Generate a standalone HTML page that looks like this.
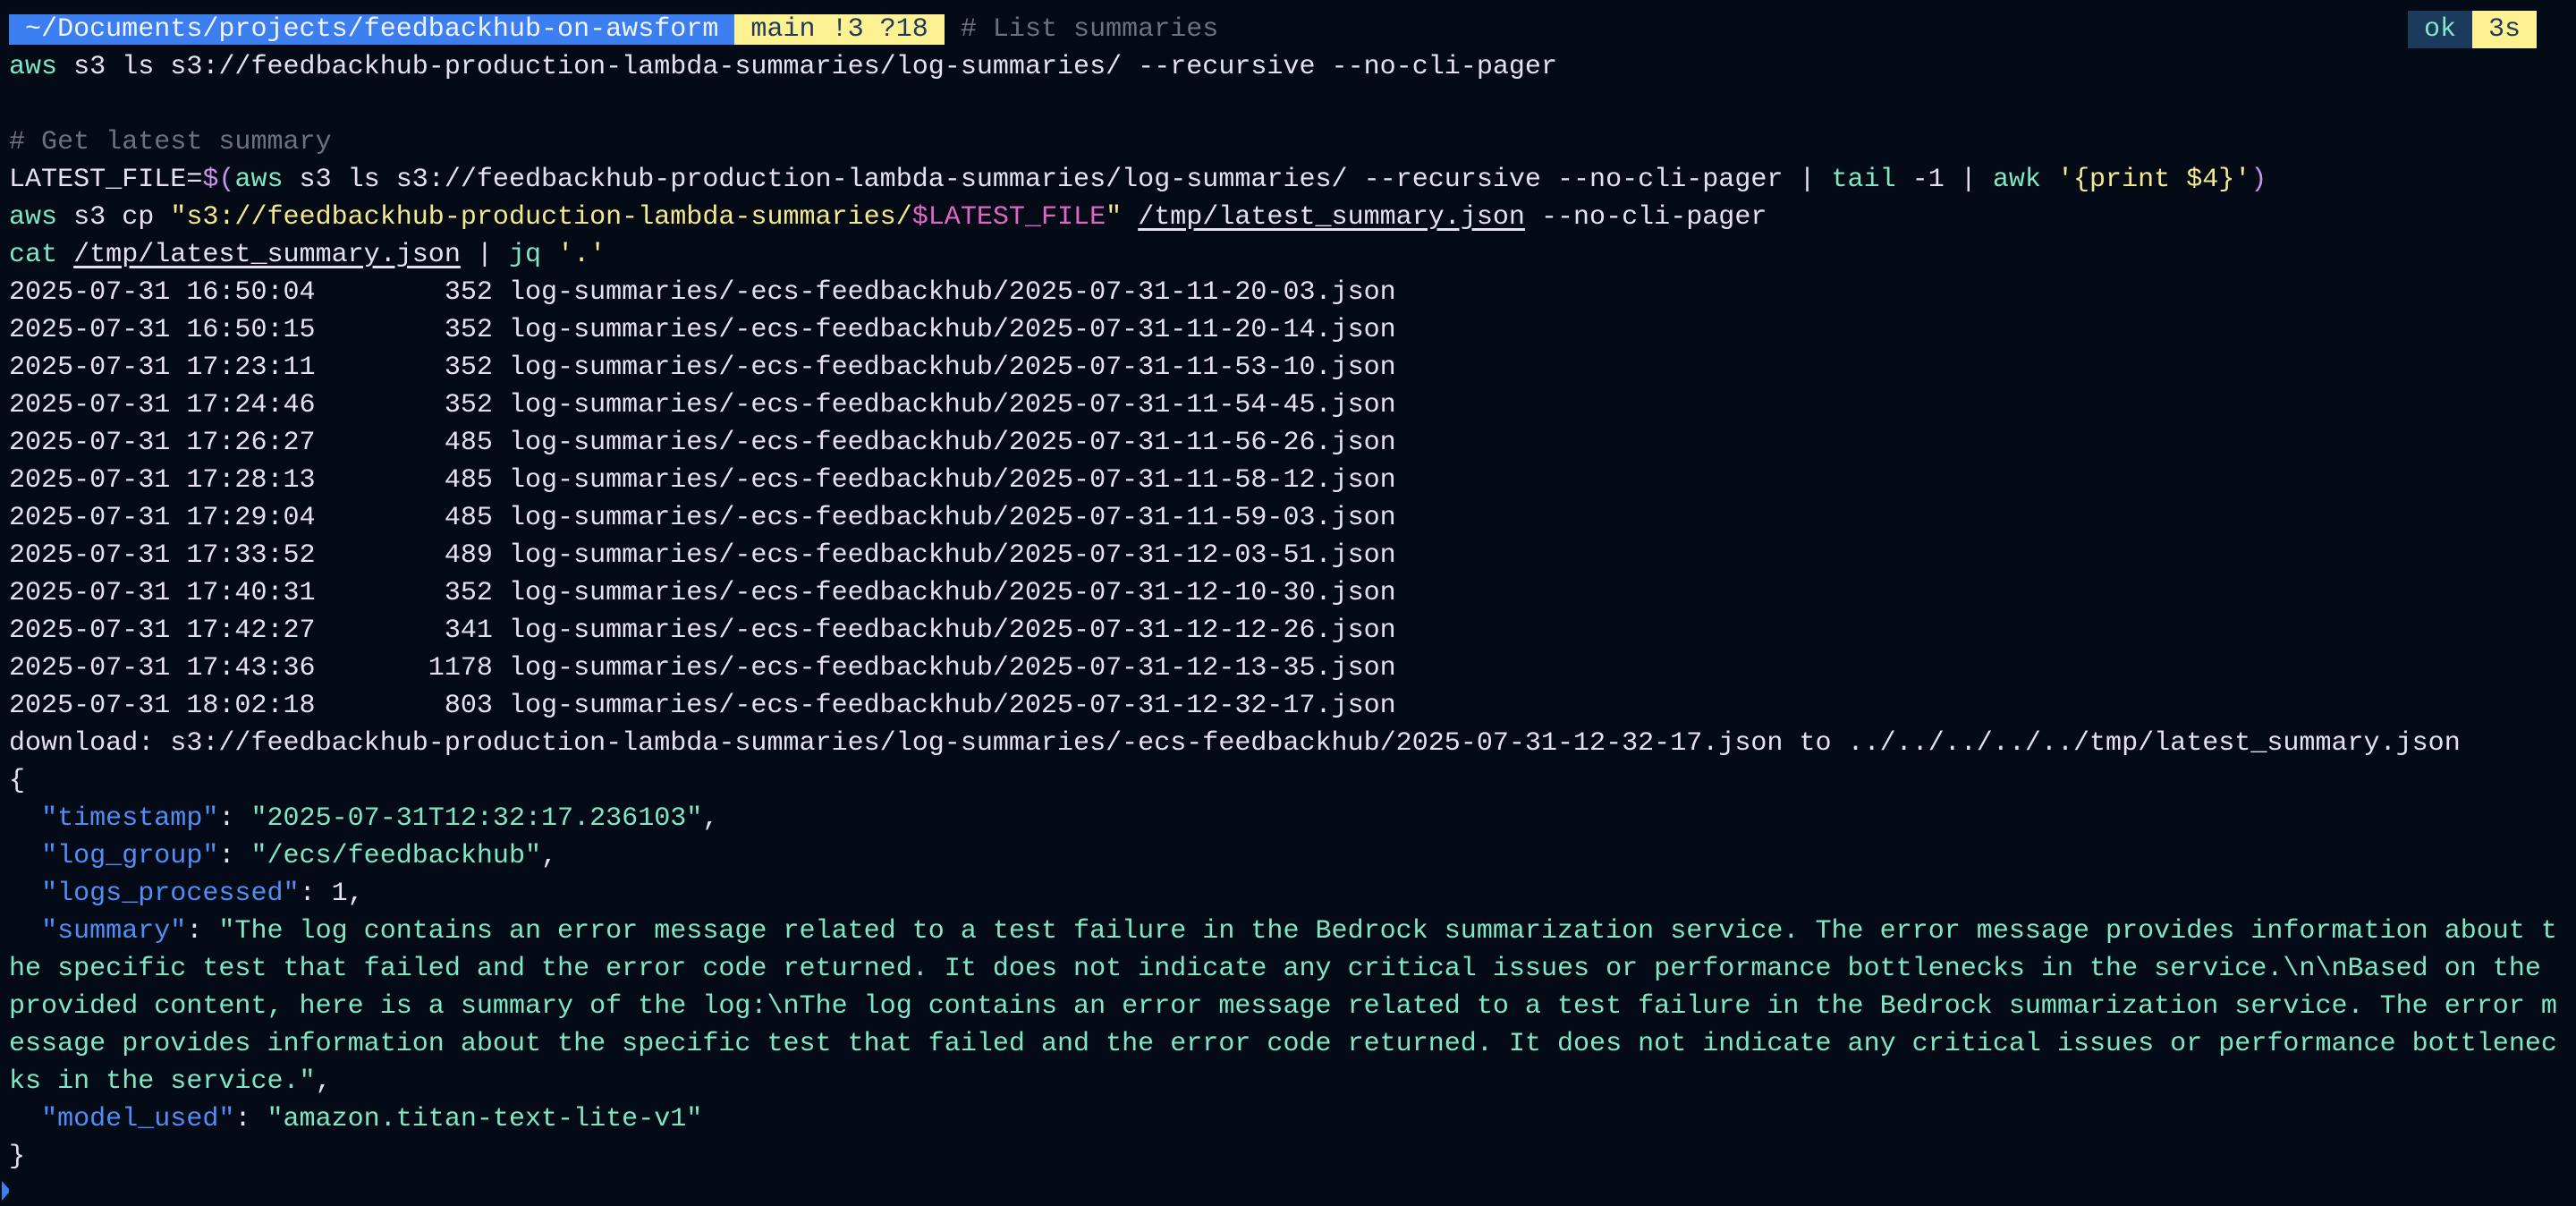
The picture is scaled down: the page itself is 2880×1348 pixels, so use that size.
<!DOCTYPE html>
<html><head><meta charset="utf-8"><style>
html,body{margin:0;padding:0;background:#050b16;width:2880px;height:1348px;overflow:hidden}
body{font-family:"Liberation Mono",monospace;font-size:30.05px;color:#e6e1ef;position:relative}
.l{position:absolute;left:10px;height:42px;line-height:42px;white-space:pre}
.g{color:#7ee8c4}.c{color:#6c717b}.p{color:#c792ea}.y{color:#f5e98c}.k{color:#4f8ef7}.pk{color:#e066c6}
.u{text-decoration:underline;text-underline-offset:5px}
.bl{background:#3b7ff0;color:#f3f3fb}.ye{background:#fdf191;color:#1e3a5f}
.ok{position:absolute;left:2692px;top:12px;width:72px;height:42px;line-height:42px;text-align:center;background:#1c3a5c;color:#7ee8c8}
.ts{position:absolute;left:2764px;top:12px;width:72px;height:42px;line-height:42px;text-align:center;background:#fdf191;color:#1e3a5f}
</style></head><body>
<div class="l" style="top:12px"><span class="bl"> ~/Documents/projects/feedbackhub-on-awsform </span><span class="ye"> main !3 ?18 </span> <span class="c"># List summaries</span></div>
<div class="ok">ok</div><div class="ts">3s</div>
<div class="l" style="top:54px"><span class="g">aws</span> s3 ls s3://feedbackhub-production-lambda-summaries/log-summaries/ --recursive --no-cli-pager</div>
<div class="l" style="top:138px"><span class="c"># Get latest summary</span></div>
<div class="l" style="top:180px">LATEST_FILE=<span class="p">$(</span><span class="g">aws</span> s3 ls s3://feedbackhub-production-lambda-summaries/log-summaries/ --recursive --no-cli-pager | <span class="g">tail</span> -1 | <span class="g">awk</span> <span class="y">'{print $4}'</span><span class="p">)</span></div>
<div class="l" style="top:222px"><span class="g">aws</span> s3 cp <span class="y">"s3://feedbackhub-production-lambda-summaries/</span><span class="pk">$LATEST_FILE</span><span class="y">"</span> <span class="u">/tmp/latest_summary.json</span> --no-cli-pager</div>
<div class="l" style="top:264px"><span class="g">cat</span> <span class="u">/tmp/latest_summary.json</span> | <span class="g">jq</span> <span class="y">'.'</span></div>
<div class="l" style="top:306px">2025-07-31 16:50:04        352 log-summaries/-ecs-feedbackhub/2025-07-31-11-20-03.json</div>
<div class="l" style="top:348px">2025-07-31 16:50:15        352 log-summaries/-ecs-feedbackhub/2025-07-31-11-20-14.json</div>
<div class="l" style="top:390px">2025-07-31 17:23:11        352 log-summaries/-ecs-feedbackhub/2025-07-31-11-53-10.json</div>
<div class="l" style="top:432px">2025-07-31 17:24:46        352 log-summaries/-ecs-feedbackhub/2025-07-31-11-54-45.json</div>
<div class="l" style="top:474px">2025-07-31 17:26:27        485 log-summaries/-ecs-feedbackhub/2025-07-31-11-56-26.json</div>
<div class="l" style="top:516px">2025-07-31 17:28:13        485 log-summaries/-ecs-feedbackhub/2025-07-31-11-58-12.json</div>
<div class="l" style="top:558px">2025-07-31 17:29:04        485 log-summaries/-ecs-feedbackhub/2025-07-31-11-59-03.json</div>
<div class="l" style="top:600px">2025-07-31 17:33:52        489 log-summaries/-ecs-feedbackhub/2025-07-31-12-03-51.json</div>
<div class="l" style="top:642px">2025-07-31 17:40:31        352 log-summaries/-ecs-feedbackhub/2025-07-31-12-10-30.json</div>
<div class="l" style="top:684px">2025-07-31 17:42:27        341 log-summaries/-ecs-feedbackhub/2025-07-31-12-12-26.json</div>
<div class="l" style="top:726px">2025-07-31 17:43:36       1178 log-summaries/-ecs-feedbackhub/2025-07-31-12-13-35.json</div>
<div class="l" style="top:768px">2025-07-31 18:02:18        803 log-summaries/-ecs-feedbackhub/2025-07-31-12-32-17.json</div>
<div class="l" style="top:810px">download: s3://feedbackhub-production-lambda-summaries/log-summaries/-ecs-feedbackhub/2025-07-31-12-32-17.json to ../../../../../tmp/latest_summary.json</div>
<div class="l" style="top:852px">{</div>
<div class="l" style="top:894px">  <span class="k">"timestamp"</span>: <span class="g">"2025-07-31T12:32:17.236103"</span>,</div>
<div class="l" style="top:936px">  <span class="k">"log_group"</span>: <span class="g">"/ecs/feedbackhub"</span>,</div>
<div class="l" style="top:978px">  <span class="k">"logs_processed"</span>: 1,</div>
<div class="l g" style="top:1020px"><span style="color:#e6e1ef">  </span><span class="k">"summary"</span><span style="color:#e6e1ef">: </span>"The log contains an error message related to a test failure in the Bedrock summarization service. The error message provides information about t</div>
<div class="l g" style="top:1062px">he specific test that failed and the error code returned. It does not indicate any critical issues or performance bottlenecks in the service.\n\nBased on the</div>
<div class="l g" style="top:1104px">provided content, here is a summary of the log:\nThe log contains an error message related to a test failure in the Bedrock summarization service. The error m</div>
<div class="l g" style="top:1146px">essage provides information about the specific test that failed and the error code returned. It does not indicate any critical issues or performance bottlenec</div>
<div class="l g" style="top:1188px">ks in the service."<span style="color:#e6e1ef">,</span></div>
<div class="l" style="top:1230px">  <span class="k">"model_used"</span>: <span class="g">"amazon.titan-text-lite-v1"</span></div>
<div class="l" style="top:1272px">}</div>
<svg style="position:absolute;left:2px;top:1320px" width="10" height="22"><path d="M0 0 L8 9 L8 13 L0 22 Z" fill="#3b7ff0"/></svg>
</body></html>
